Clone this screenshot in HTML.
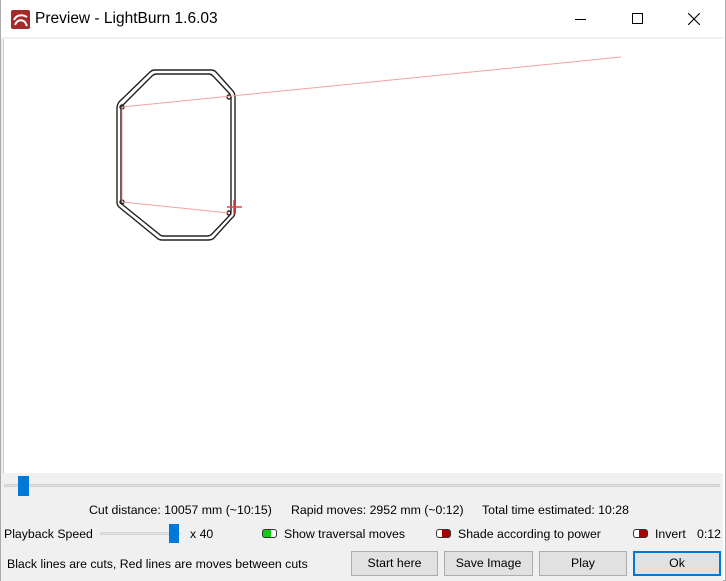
<!DOCTYPE html>
<html><head><style>
*{margin:0;padding:0;box-sizing:border-box}
body{width:726px;height:581px;background:#fff;font-family:"Liberation Sans",sans-serif;position:relative;overflow:hidden}
.a{position:absolute}
.t{font-size:12.3px;color:#000;white-space:nowrap}
.btn{position:absolute;top:551px;height:25px;background:#e1e1e1;border:1px solid #adadad;font-size:12.3px;text-align:center;line-height:23px}
.tog{position:absolute;width:15px;height:9px;border:1px solid #333;border-radius:3px;background:#fff}
</style></head><body>
<div class="a" style="left:0;top:0;width:726px;height:581px;border:1px solid #aaa;border-top:none"></div>
<div class="a" style="left:11px;top:10px;width:19px;height:19px;background:#a52a2a;border-radius:2px"></div>
<svg class="a" style="left:11px;top:10px" width="19" height="19"><path d="M3 10 C5 5 11 4 16 7 M4 15 C6 10 10 9 14 12 L16 16" stroke="#fff" stroke-width="2" fill="none"/></svg>
<div class="a" style="left:35px;top:10px;font-size:15.5px;color:#000">Preview - LightBurn 1.6.03</div>
<div class="a" style="left:575px;top:19px;width:11px;height:1px;background:#000"></div>
<div class="a" style="left:632px;top:13px;width:11px;height:11px;border:1px solid #000"></div>
<svg class="a" style="left:688px;top:13px" width="12" height="12"><path d="M0 0L12 12M12 0L0 12" stroke="#000" stroke-width="1.1"/></svg>
<div class="a" style="left:1px;top:37px;width:722px;height:2px;background:#f0f0f0"></div>
<div class="a" style="left:1px;top:39px;width:3px;height:434px;background:#f0f0f0;border-right:1px solid #ccc"></div>
<svg class="a" style="left:0;top:0" width="726" height="475">
<g fill="none" stroke="#222" stroke-width="1.4">
<path d="M155 70 L211 70 Q214 70 216 72 L233 91 Q235 94 235 97 L235 212 Q235 216 232 218 L214 238 Q212 240 208 240 L162 240 Q159 240 157 238 L119 207 Q117 205 117 202 L117 108 Q117 105 119 102 L150 72 Q152 70 155 70 Z"/>
<path d="M157 74 L209 74 Q211 74 213 76 L229 93 Q231 95 231 98 L231 211 Q231 214 229 216 L212 234 Q210 236 207 236 L163 236 Q161 236 159 234 L123 205 Q121 203 121 200 L121 109 Q121 107 123 105 L152 76 Q154 74 157 74 Z"/>
<circle cx="122" cy="107" r="2"/><circle cx="229" cy="97" r="2"/><circle cx="122" cy="202" r="2"/><circle cx="229" cy="213" r="2"/>
</g>
<g stroke="#f5a0a0" stroke-width="1" fill="none">
<path d="M122 107 L621 57 M122 107 L122 202 L229 213"/>
</g>
<path d="M227 207 L242 207 M234 200 L234 214" stroke="#e84040" stroke-width="1.5"/>
</svg>
<div class="a" style="left:1px;top:473px;width:722px;height:108px;background:#f0f0f0"></div>
<div class="a" style="left:4px;top:484px;width:716px;height:3px;background:#e2e2e2;border:1px solid #d0d0d0"></div>
<div class="a" style="left:18px;top:476px;width:11px;height:20px;background:#0078d7"></div>
<div class="a t" style="left:89px;top:503px">Cut distance: 10057 mm (~10:15)</div>
<div class="a t" style="left:291px;top:503px">Rapid moves: 2952 mm (~0:12)</div>
<div class="a t" style="left:482px;top:503px">Total time estimated: 10:28</div>
<div class="a t" style="left:4px;top:527px">Playback Speed</div>
<div class="a" style="left:100px;top:532px;width:80px;height:3px;background:#e2e2e2;border:1px solid #d6d6d6"></div>
<div class="a" style="left:169px;top:524px;width:10px;height:19px;background:#0078d7"></div>
<div class="a t" style="left:190px;top:527px">x 40</div>
<div class="tog" style="left:262px;top:529px;background:linear-gradient(90deg,#1c1 0 60%,#fff 60%)"></div>
<div class="a t" style="left:284px;top:527px">Show traversal moves</div>
<div class="tog" style="left:436px;top:529px;background:linear-gradient(90deg,#fff 0 40%,#a00 40%)"></div>
<div class="a t" style="left:458px;top:527px">Shade according to power</div>
<div class="tog" style="left:633px;top:529px;background:linear-gradient(90deg,#fff 0 40%,#a00 40%)"></div>
<div class="a t" style="left:655px;top:527px">Invert</div>
<div class="a t" style="left:697px;top:527px">0:12</div>
<div class="a t" style="left:7px;top:557px">Black lines are cuts, Red lines are moves between cuts</div>
<div class="btn" style="left:351px;width:87px">Start here</div>
<div class="btn" style="left:444px;width:89px">Save Image</div>
<div class="btn" style="left:539px;width:88px">Play</div>
<div class="btn" style="left:633px;width:88px;border:2px solid #0078d7;line-height:21px">Ok</div>
</body></html>
